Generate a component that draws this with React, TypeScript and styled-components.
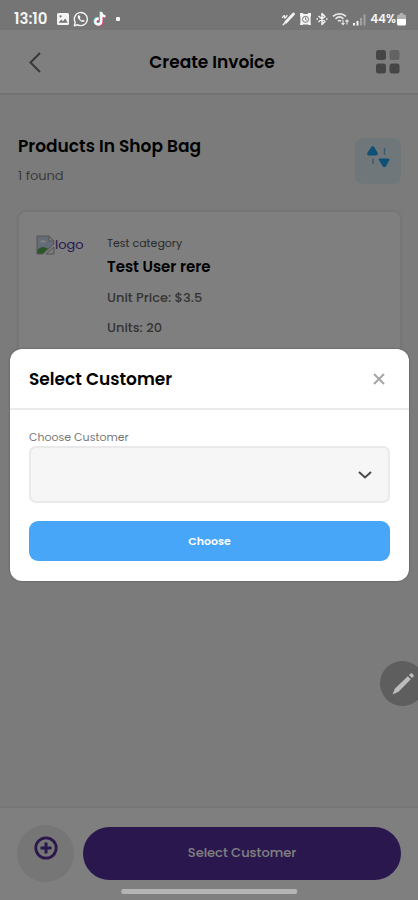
import React from "react";
import styled, { createGlobalStyle } from "styled-components";

const GlobalStyle = createGlobalStyle`
  *, *::before, *::after { box-sizing: border-box; }
  body { margin: 0; background: #7b7b7b; font-family: Poppins, Inter, sans-serif; color: #000; }
  button, select { font-family: inherit; }
  h1, h2, h3, p { margin: 0; }
`;

const Screen = styled.div`
  min-height: 100vh;
  display: flex;
  flex-direction: column;
`;

const StatusBar = styled.div`
  height: 30px;
  flex: none;
  display: flex;
  align-items: center;
  justify-content: space-between;
  padding: 8px 12px 0 14px;
  background: #757575;
  color: #f4f4f4;
`;

const StatusGroup = styled.div<{ $gap: number }>`
  display: flex;
  align-items: center;
  gap: ${({ $gap }) => $gap}px;
`;

const Clock = styled.span`
  font-size: 15px;
  line-height: 16px;
  font-weight: 600;
  margin-right: 6px;
`;

const Battery = styled.span`
  display: flex;
  align-items: center;
  gap: 1px;
  font-size: 12px;
  line-height: 16px;
  font-weight: 600;
`;

const Dot = styled.span`
  width: 4px;
  height: 4px;
  margin-left: 6px;
  border-radius: 1px;
  background: #f4f4f4;
`;

const AppArea = styled.div`
  flex: 1;
  position: relative;
  display: flex;
  flex-direction: column;
  background: #f7f7f7;
`;

const Header = styled.header`
  display: grid;
  grid-template-columns: 54px 1fr 48px;
  align-items: center;
  height: 65px;
  padding: 0 17px;
  background: #fff;
  border-bottom: 2px solid #e6e6e6;
`;

const Title = styled.h1`
  font-size: 17px;
  line-height: 24px;
  font-weight: 600;
  text-align: center;
`;

const IconButton = styled.button<{ $end?: boolean }>`
  display: flex;
  align-items: center;
  justify-content: ${({ $end }) => ($end ? "flex-end" : "flex-start")};
  height: 32px;
  padding: 0;
  border: 0;
  background: none;
`;

const Main = styled.main`
  flex: 1;
  padding: 39px 17px 24px 18px;
`;

const SectionHead = styled.div`
  display: flex;
  justify-content: space-between;
  align-items: flex-end;
  margin-bottom: 25px;
`;

const SectionTitle = styled.h2`
  font-size: 17px;
  line-height: 24px;
  font-weight: 600;
`;

const Found = styled.p`
  margin-top: 8px;
  font-size: 13px;
  line-height: 20px;
  color: #777;
`;

const SortButton = styled.button`
  display: grid;
  place-items: center;
  width: 46px;
  height: 46px;
  margin-bottom: 2px;
  padding: 0 0 8px;
  border: 0;
  border-radius: 8px;
  background: #deeff7;
`;

const Card = styled.article`
  display: flex;
  gap: 23px;
  min-height: 164px;
  padding: 21px 17px;
  border: 1px solid #ededed;
  border-radius: 8px;
  background: #fff;
  box-shadow: 0 0 3px rgba(0, 0, 0, 0.12);
`;

const Logo = styled.a`
  display: flex;
  align-items: center;
  gap: 0;
  flex: none;
  width: 48px;
  height: 24px;
  font-size: 13px;
  color: #5330a0;
  text-decoration: none;
`;

const Details = styled.div`
  display: flex;
  flex-direction: column;
`;

const Category = styled.p`
  font-size: 11px;
  line-height: 20px;
  color: #555;
`;

const ProductName = styled.h3`
  margin: 3px 0 10px;
  font-size: 15px;
  line-height: 22px;
  font-weight: 600;
`;

const Fact = styled.p`
  font-size: 13px;
  line-height: 20px;
  margin-bottom: 10px;
  color: #6a6a6a;
  font-weight: 500;
`;

const Footer = styled.footer`
  display: flex;
  align-items: center;
  gap: 9px;
  height: 94px;
  padding: 0 17px 2px;
  background: #fff;
  border-top: 2px solid #ececec;
`;

const AddButton = styled.button`
  display: grid;
  place-items: center;
  flex: none;
  width: 57px;
  height: 57px;
  padding: 0 0 10px;
  border: 0;
  border-radius: 50%;
  background: #ececec;
`;

const PrimaryButton = styled.button`
  flex: 1;
  height: 53px;
  border: 0;
  border-radius: 27px;
  background: #532e9c;
  color: #fff;
  font-size: 13px;
  font-weight: 500;
`;

const Backdrop = styled.div`
  position: absolute;
  inset: 0;
  display: grid;
  align-items: center;
  padding: 0 9px 0 10px;
  background: rgba(0, 0, 0, 0.5);
`;

const Dialog = styled.section`
  border-radius: 12px;
  background: #fff;
  box-shadow: 0 0 2px rgba(0, 0, 0, 0.4);
`;

const DialogHead = styled.div`
  display: flex;
  align-items: center;
  justify-content: space-between;
  height: 61px;
  padding: 0 23px 0 19px;
  border-bottom: 2px solid #ebebeb;
`;

const DialogBody = styled.form`
  display: flex;
  flex-direction: column;
  padding: 18px 19px 20px;
`;

const FieldLabel = styled.label`
  font-size: 11px;
  line-height: 18px;
  color: #777;
`;

const SelectWrap = styled.div`
  display: grid;
  align-items: center;
  margin-bottom: 18px;

  > * { grid-area: 1 / 1; }

  svg {
    justify-self: end;
    margin-right: 18px;
    pointer-events: none;
  }
`;

const Select = styled.select`
  appearance: none;
  width: 100%;
  height: 57px;
  padding: 0 44px 0 16px;
  border: 2px solid #e9e9e9;
  border-radius: 7px;
  background: #f6f6f6;
  font-size: 13px;
`;

const ChooseButton = styled.button`
  height: 40px;
  border: 0;
  border-radius: 9px;
  background: #48a6f8;
  color: #fff;
  font-size: 11px;
  font-weight: 600;
`;

const PenBubble = styled.button`
  position: absolute;
  right: -7px;
  bottom: 194px;
  display: grid;
  place-items: center;
  width: 45px;
  height: 45px;
  padding: 0;
  border: 0;
  border-radius: 50%;
  background: #5e5e5e;
`;

const Clip = styled.div`
  position: absolute;
  inset: 0;
  overflow: hidden;
  pointer-events: none;

  button { pointer-events: auto; }
`;

const HomeIndicator = styled.div`
  position: absolute;
  left: 50%;
  bottom: 6px;
  width: 42%;
  height: 5px;
  transform: translateX(-50%);
  border-radius: 2px;
  background: #b4b4b4;
`;

const PhotoIcon = () => (
  <svg width="14" height="14" viewBox="0 0 14 14" aria-hidden="true">
    <rect x="1" y="1" width="12" height="12" rx="1.5" fill="#f4f4f4" />
    <path d="M2.5 10.8 5.2 7.4 7 9.3 9.2 6.6l2.6 4.2z" fill="#757575" />
    <circle cx="4.6" cy="4.4" r="1.1" fill="#757575" />
  </svg>
);

const WhatsAppIcon = () => (
  <svg width="16" height="16" viewBox="0 0 16 16" fill="none" aria-hidden="true">
    <path d="M1.3 14.7 2.2 11.3A6.5 6.5 0 1 1 4.8 13.8z" stroke="#f4f4f4" strokeWidth="1.4" strokeLinejoin="round" />
    <path d="M5.2 4.5c-1 1-.5 2.800 1.200 4.600s3.600 2.500 4.800 1.500c.5-.5.4-1 0-1.300l-1.200-.6-.9.900c-1-.4-1.900-1.300-2.300-2.300l.7-.8-.6-1.600c-.3-.6-1.100-.9-1.700-.4z" fill="#f4f4f4" />
  </svg>
);

const TikTokIcon = () => {
  const note = "M8.200 1h2.200c.2 2 1.300 3.100 3.100 3.300v2.200c-1.200 0-2.200-.4-3-1v5c0 5.700-8.300 5.400-8.300.2 0-2.800 2.200-4.400 4.600-4.100v2.400c-1.300-.4-2.300.4-2.300 1.600 0 2.400 3.700 2.300 3.700-.4z";
  return (
    <svg width="15" height="16" viewBox="0 0 15 16" aria-hidden="true">
      <path d={note} fill="#5fe0dc" transform="translate(-.8 -.5)" />
      <path d={note} fill="#e5386b" transform="translate(.8 .6)" />
      <path d={note} fill="#fff" />
    </svg>
  );
};

const StylusIcon = () => (
  <svg width="14" height="14" viewBox="0 0 14 14" fill="none" stroke="#f4f4f4" strokeLinecap="round" aria-hidden="true">
    <path d="M12.500 2 5 10" strokeWidth="2.800" />
    <path d="m4.200 10.800-2 2" strokeWidth="1.400" />
    <path d="M1.500 5.500C3 3 4 3.400 3.600 5s1 1.300 2.400-1.500" strokeWidth="1.300" />
  </svg>
);

const AlarmIcon = () => (
  <svg width="13" height="14" viewBox="0 0 13 14" aria-hidden="true">
    <path d="M1 1h2.800l.7 1h4l.7-1H12v3l-.4 1v5l.4 3H9.500l-.5-.5H4l-.5.5H1l.4-3V5L1 4z" fill="#f4f4f4" />
    <circle cx="6.500" cy="7.300" r="3" fill="none" stroke="#757575" />
    <path d="M6.500 5.500v2l1.300.6" fill="none" stroke="#757575" />
  </svg>
);

const BluetoothIcon = () => (
  <svg width="12" height="14" viewBox="0 0 12 14" fill="none" stroke="#f4f4f4" strokeWidth="1.500" strokeLinejoin="round" aria-hidden="true">
    <path d="m2.500 4 6.500 5.500L6 12.500v-11l3 3L2.500 10" />
    <path d="M.5 7H2M10 7h1.500" />
  </svg>
);

const WifiIcon = () => (
  <svg width="17" height="14" viewBox="0 0 17 14" fill="none" stroke="#e6e6e6" aria-hidden="true">
    <path d="M1 4.300C4.500 1 10.500 1 14 4.300M3.500 6.800c2.400-2.200 5.600-2.200 8 0M6 9.200c1-.9 2-.9 3 0" strokeWidth="1.700" />
    <path d="M11 8v4.500m-1.500-1.500 1.500 1.700 1.500-1.700M15 12.500V8m-1.500 1.500L15 8l1.500 1.500" strokeWidth="1.100" />
  </svg>
);

const SignalIcon = () => (
  <svg width="13" height="13" viewBox="0 0 13 13" aria-hidden="true">
    <path d="M0 10h2v2.500H0zM3.500 8h2v4.500h-2z" fill="#f4f4f4" />
    <path d="M7 5h2v7.500H7zM10.500 1.500h2v11h-2z" fill="#a2a2a2" />
  </svg>
);

const BatteryIcon = () => (
  <svg width="9" height="13" viewBox="0 0 9 13" aria-hidden="true">
    <path d="M3 0h3v1.500h1.500Q9 1.500 9 3v4H0V3q0-1.500 1.500-1.500H3z" fill="#b0b0b0" />
    <path d="M0 6h9v5q0 1.500-1.500 1.500h-6Q0 12.500 0 11z" fill="#fff" />
  </svg>
);

const BackIcon = () => (
  <svg width="36" height="24" viewBox="0 0 36 24" fill="none" stroke="#707070" strokeWidth="2" aria-hidden="true">
    <path d="m23 3-9.500 9.500L23 22" />
  </svg>
);

const GridIcon = () => (
  <svg width="26" height="26" viewBox="0 0 26 26" fill="#8c8c8c" aria-hidden="true">
    <rect x="1" y="1" width="10" height="10" rx="2.500" />
    <rect x="14.500" y="1" width="10" height="10" rx="2.500" fill="#c6c6c6" />
    <rect x="1" y="14.500" width="10" height="10" rx="2.500" />
    <rect x="14.500" y="14.500" width="10" height="10" rx="2.500" />
  </svg>
);

const SortIcon = () => (
  <svg width="26" height="24" viewBox="0 0 26 24" aria-hidden="true">
    <path d="M6.800 1.500q1-.9 2 0l3.700 6q.9 3-1.500 3H3.800q-2.400 0-1.300-3zM14.500 13.500h9q1.500 0 .9 1.800l-3.400 6q-1.500 2-3.300 0l-3.700-6q-.8-1.800.5-1.800z" fill="#1fa3ec" />
    <path d="M8 13.500V19M19.500 3v7" stroke="#7fb6d2" strokeWidth="1.500" />
  </svg>
);

const BrokenImageIcon = () => (
  <svg width="19" height="20" viewBox="0 0 19 20" aria-hidden="true">
    <path d="M1 1h12l5 5v3L7 19H1z" fill="#c9d9f3" stroke="#a8a8a8" />
    <path d="M4 7.500q0-2 2-2 1-1.500 2.500 0 2 0 2 2z" fill="#fff" />
    <path d="M1.500 18.500v-4Q6 10 12 13.500l-5 5z" fill="#55ac4b" />
    <path d="M13 1v5h5zM18 12v7h-8z" fill="#f5f5f5" stroke="#a8a8a8" />
  </svg>
);

const PlusCircleIcon = () => (
  <svg width="24" height="24" viewBox="0 0 24 24" fill="none" stroke="#532e9c" aria-hidden="true">
    <circle cx="12" cy="12" r="10.200" strokeWidth="2.800" />
    <path d="M12 6.500v11M6.500 12h11" strokeWidth="3" />
  </svg>
);

const CloseIcon = () => (
  <svg width="14" height="14" viewBox="0 0 14 14" stroke="#a5a5a5" strokeWidth="2" aria-hidden="true">
    <path d="m2 2 10 10M12 2 2 12" />
  </svg>
);

const ChevronIcon = () => (
  <svg width="14" height="10" viewBox="0 0 14 10" fill="none" stroke="#484848" strokeWidth="2" aria-hidden="true">
    <path d="m1 2 6 5.500L13 2" />
  </svg>
);

const PenIcon = () => (
  <svg width="24" height="24" viewBox="0 0 24 24" fill="#bdbdbd" aria-hidden="true">
    <path d="m1.500 22.500 2.500-6L16.800 4.200l3 3L7.500 19.800z" />
    <path d="m18 3 1.500-1.500q.8-.7 1.600 0l1.400 1.400q.7.800 0 1.600L21 6z" />
  </svg>
);

export default function App() {
  return (
    <>
      <GlobalStyle />
      <Screen>
        <StatusBar>
          <StatusGroup $gap={3}>
            <Clock>13:10</Clock>
            <PhotoIcon />
            <WhatsAppIcon />
            <TikTokIcon />
            <Dot />
          </StatusGroup>
          <StatusGroup $gap={4}>
            <StylusIcon />
            <AlarmIcon />
            <BluetoothIcon />
            <WifiIcon />
            <SignalIcon />
            <Battery>
              44%
              <BatteryIcon />
            </Battery>
          </StatusGroup>
        </StatusBar>
        <AppArea>
          <Header>
            <IconButton aria-label="Back"><BackIcon /></IconButton>
            <Title>Create Invoice</Title>
            <IconButton $end aria-label="Menu"><GridIcon /></IconButton>
          </Header>
          <Main>
            <SectionHead>
              <div>
                <SectionTitle>Products In Shop Bag</SectionTitle>
                <Found>1 found</Found>
              </div>
              <SortButton aria-label="Sort"><SortIcon /></SortButton>
            </SectionHead>
            <Card>
              <Logo href="#"><BrokenImageIcon />logo</Logo>
              <Details>
                <Category>Test category</Category>
                <ProductName>Test User rere</ProductName>
                <Fact>Unit Price: $3.5</Fact>
                <Fact>Units: 20</Fact>
              </Details>
            </Card>
          </Main>
          <Footer>
            <AddButton aria-label="Add"><PlusCircleIcon /></AddButton>
            <PrimaryButton>Select Customer</PrimaryButton>
          </Footer>
          <Backdrop>
            <Dialog role="dialog" aria-modal="true" aria-labelledby="dialog-title">
              <DialogHead>
                <SectionTitle id="dialog-title">Select Customer</SectionTitle>
                <IconButton $end aria-label="Close"><CloseIcon /></IconButton>
              </DialogHead>
              <DialogBody>
                <FieldLabel htmlFor="customer">Choose Customer</FieldLabel>
                <SelectWrap>
                  <Select id="customer" />
                  <ChevronIcon />
                </SelectWrap>
                <ChooseButton type="button">Choose</ChooseButton>
              </DialogBody>
            </Dialog>
          </Backdrop>
          <Clip>
            <PenBubble aria-label="Edit"><PenIcon /></PenBubble>
            <HomeIndicator />
          </Clip>
        </AppArea>
      </Screen>
    </>
  );
}
